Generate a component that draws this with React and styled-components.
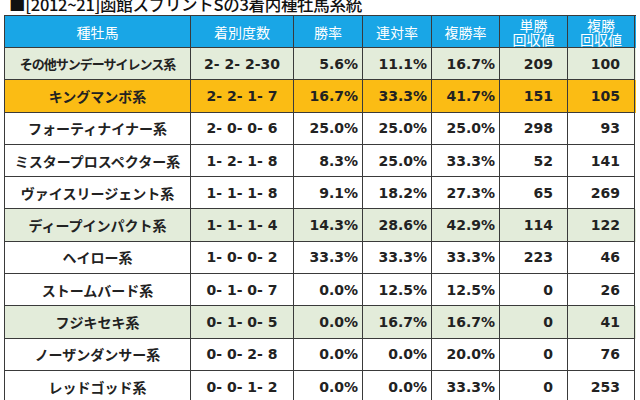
import React from "react";
import styled, { createGlobalStyle } from "styled-components";

const GlobalStyle = createGlobalStyle`
  body {
    margin: 0;
    background: #fff;
    font-family: "Noto Sans CJK JP", sans-serif;
    color: #222;
  }
`;

const Page = styled.div`
  padding-left: 4px;
`;

const Title = styled.div`
  height: 15px;
  overflow: hidden;
  padding-left: 5px;
  font-size: 16.5px;
  line-height: 8px;
  font-weight: 500;
  letter-spacing: -0.3px;
  color: #111;
  white-space: nowrap;
`;

const Table = styled.div`
  width: 631px;
  border-top: 1px solid #3a3a3a;
  border-left: 1px solid #3a3a3a;
`;

const tones = {
  head: "#19a6e6",
  green: "#e3ecda",
  orange: "#fbbc14",
  white: "#ffffff",
};

const Row = styled.div`
  display: grid;
  grid-template-columns: 186px 103px 69px 69px 68px 68px 67px;
  height: ${(p) => (p.$tone === "head" ? "32px" : "32.3px")};
  background: ${(p) => tones[p.$tone]};
`;

const Cell = styled.div`
  box-sizing: border-box;
  border-right: 1px solid #3a3a3a;
  border-bottom: 1px solid #3a3a3a;
  display: flex;
  align-items: center;
  overflow: hidden;
  white-space: pre;
`;

const HeadCell = styled(Cell)`
  justify-content: center;
  text-align: center;
  color: #fff;
  font-size: 14px;
  line-height: 14px;
  font-weight: 400;
`;

const NameCell = styled(Cell)`
  justify-content: center;
  font-size: ${(p) => (p.$tight ? "13px" : "14px")};
  letter-spacing: ${(p) => (p.$tight ? "-1px" : "0")};
  font-weight: 700;
  color: #222;
`;

const NumCell = styled(Cell)`
  justify-content: ${(p) => (p.$center ? "center" : "flex-end")};
  padding-right: ${(p) => p.$pad || 0}px;
  font-family: "DejaVu Sans", "Noto Sans CJK JP", sans-serif;
  font-size: 14px;
  font-weight: 700;
  color: #222;
`;

const heads = ["種牡馬", "着別度数", "勝率", "連対率", "複勝率", "単勝\n回収値", "複勝\n回収値"];

const rows = [
  ["その他サンデーサイレンス系", "2- 2- 2-30", "5.6%", "11.1%", "16.7%", "209", "100", "green", true],
  ["キングマンボ系", "2- 2- 1- 7", "16.7%", "33.3%", "41.7%", "151", "105", "orange"],
  ["フォーティナイナー系", "2- 0- 0- 6", "25.0%", "25.0%", "25.0%", "298", "93", "white"],
  ["ミスタープロスペクター系", "1- 2- 1- 8", "8.3%", "25.0%", "33.3%", "52", "141", "white"],
  ["ヴァイスリージェント系", "1- 1- 1- 8", "9.1%", "18.2%", "27.3%", "65", "269", "white"],
  ["ディープインパクト系", "1- 1- 1- 4", "14.3%", "28.6%", "42.9%", "114", "122", "green"],
  ["ヘイロー系", "1- 0- 0- 2", "33.3%", "33.3%", "33.3%", "223", "46", "white"],
  ["ストームバード系", "0- 1- 0- 7", "0.0%", "12.5%", "12.5%", "0", "26", "white"],
  ["フジキセキ系", "0- 1- 0- 5", "0.0%", "16.7%", "16.7%", "0", "41", "green"],
  ["ノーザンダンサー系", "0- 0- 2- 8", "0.0%", "0.0%", "20.0%", "0", "76", "white"],
  ["レッドゴッド系", "0- 0- 1- 2", "0.0%", "0.0%", "33.3%", "0", "253", "white"],
];

export default function App() {
  return (
    <Page>
      <GlobalStyle />
      <Title>■[2012~21]函館スプリントSの3着内種牡馬系統</Title>
      <Table>
        <Row $tone="head">
          {heads.map((h) => (
            <HeadCell key={h}>{h}</HeadCell>
          ))}
        </Row>
        {rows.map(([name, record, win, ren, fuku, tan, fukuRet, tone, tight]) => (
          <Row key={name} $tone={tone}>
            <NameCell $tight={tight}>{name}</NameCell>
            <NumCell $center>{record}</NumCell>
            <NumCell $pad={4}>{win}</NumCell>
            <NumCell $pad={4}>{ren}</NumCell>
            <NumCell $pad={4}>{fuku}</NumCell>
            <NumCell $pad={14}>{tan}</NumCell>
            <NumCell $pad={14}>{fukuRet}</NumCell>
          </Row>
        ))}
      </Table>
    </Page>
  );
}
